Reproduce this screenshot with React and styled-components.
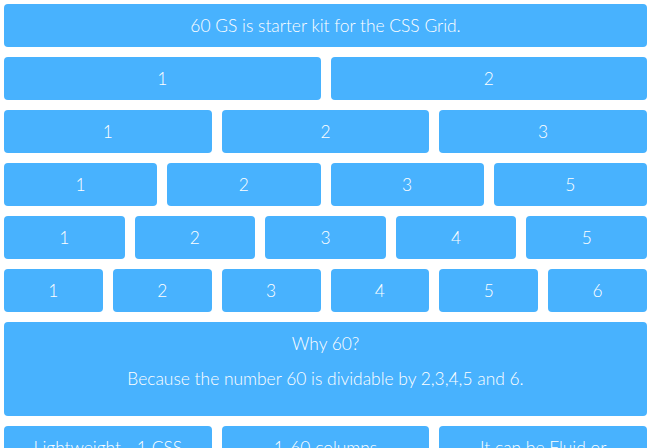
import React from 'react';
import styled, { createGlobalStyle } from 'styled-components';

const GlobalStyle = createGlobalStyle`
  body {
    margin: 0;
    background: #ffffff;
    font-family: 'Lato', 'Inter', sans-serif;
    font-weight: 300;
  }
`;

const Page = styled.div`
  display: flex;
  flex-direction: column;
  gap: 10px;
  padding: 4px;
`;

const Row = styled.div`
  display: grid;
  grid-template-columns: repeat(${(p) => p.cols}, 1fr);
  gap: 10px;
`;

const Cell = styled.div`
  background-color: #48b2fe;
  color: #ffffff;
  border-radius: 4px;
  padding: 10px ${(p) => (p.wide ? '26px' : '10px')};
  min-height: 43px;
  box-sizing: border-box;
  text-align: center;
  font-size: 17.4px;
  line-height: 23px;
  font-weight: 300;
`;

const Note = styled.p`
  margin: 12px 0 16px;
`;

const rows = [2, 3, 4, 5, 6];
const labels = {
  2: ['1', '2'],
  3: ['1', '2', '3'],
  4: ['1', '2', '3', '5'],
  5: ['1', '2', '3', '4', '5'],
  6: ['1', '2', '3', '4', '5', '6'],
};

const features = [
  'Lightweight - 1 CSS file',
  '1-60 columns',
  'It can be Fluid or Fixed',
];

const App = () => (
  <>
    <GlobalStyle />
    <Page>
      <Row cols={1}>
        <Cell>60 GS is starter kit for the CSS Grid.</Cell>
      </Row>
      {rows.map((n) => (
        <Row cols={n} key={n}>
          {labels[n].map((l, i) => (
            <Cell key={i}>{l}</Cell>
          ))}
        </Row>
      ))}
      <Row cols={1}>
        <Cell>
          Why 60?
          <Note>Because the number 60 is dividable by 2,3,4,5 and 6.</Note>
        </Cell>
      </Row>
      <Row cols={3}>
        {features.map((f) => (
          <Cell wide key={f}>
            {f}
          </Cell>
        ))}
      </Row>
    </Page>
  </>
);

export default App;
